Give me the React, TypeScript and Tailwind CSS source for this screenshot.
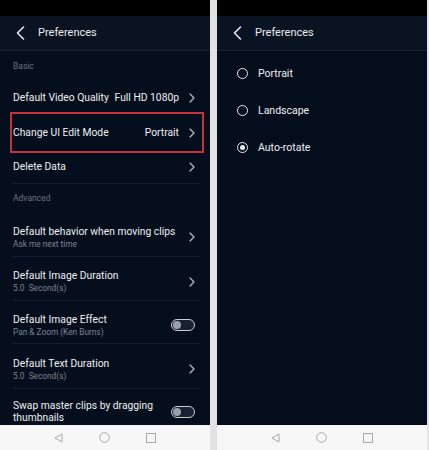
// Two phone screenshots side by side: preferences list and UI edit mode picker.
import type { ReactNode } from 'react';

const font = { fontFamily: 'Roboto, "Noto Sans", Arial, sans-serif' };

function Chevron() {
  return (
    <svg width="6" height="10" viewBox="0 0 6 10">
      <path d="M1 1l4 4-4 4" fill="none" stroke="#b8bec8" strokeWidth="1.2" strokeLinecap="round" strokeLinejoin="round" />
    </svg>
  );
}

function Back() {
  return (
    <svg width="9" height="14" viewBox="0 0 9 14">
      <path d="M7.5 1L1.5 7l6 6" fill="none" stroke="#e6e9ee" strokeWidth="1.6" strokeLinecap="round" strokeLinejoin="round" />
    </svg>
  );
}

function Toggle() {
  return (
    <div className="flex h-[12px] w-[24px] shrink-0 items-center rounded-full border border-[#c9ccd2] bg-[#1a2231] px-[1px]">
      <div className="h-[8px] w-[8px] rounded-full bg-[#9aa0a8]" />
    </div>
  );
}

function StatusBar() {
  return <div className="h-[16px] shrink-0 bg-black" />;
}

function Header() {
  return (
    <div className="flex h-[35px] shrink-0 items-center border-b border-[#1a2333] bg-[#0a1322]">
      <div className="flex w-[38px] justify-center pl-[3px]">
        <Back />
      </div>
      <span className="text-[11px] text-[#e8ebef]">Preferences</span>
    </div>
  );
}

function NavBar() {
  return (
    <div className="flex h-[25px] shrink-0 items-center justify-center gap-[36px] bg-[#f7f7f7]">
      <svg width="9" height="10" viewBox="0 0 9 10">
        <path d="M8 1L1 5l7 4z" fill="none" stroke="#a8a8a8" strokeWidth="1" strokeLinejoin="round" />
      </svg>
      <svg width="11" height="11" viewBox="0 0 11 11">
        <circle cx="5.5" cy="5.5" r="4.8" fill="none" stroke="#a8a8a8" strokeWidth="1" />
      </svg>
      <svg width="10" height="10" viewBox="0 0 10 10">
        <rect x="0.5" y="0.5" width="9" height="9" fill="none" stroke="#a8a8a8" strokeWidth="1" />
      </svg>
    </div>
  );
}

function Section({ label, h }: { label: string; h: string }) {
  return (
    <div className={`flex shrink-0 items-center px-[13px] text-[8.5px] text-[#6c7482] ${h}`}>{label}</div>
  );
}

function Row({
  title,
  sub,
  value,
  right,
  h,
  line = false,
  highlight = false,
}: {
  title: string;
  sub?: string;
  value?: string;
  right?: ReactNode;
  h: string;
  line?: boolean;
  highlight?: boolean;
}) {
  return (
    <div className={`relative flex shrink-0 items-center pl-[13px] pr-[15px] ${h} ${line ? 'after:absolute after:bottom-0 after:left-[13px] after:right-[10px] after:h-px after:bg-[#151e2c]' : ''}`}>
      {highlight && (
        <div className="absolute inset-y-[-3px] left-[10px] right-[6px] border-2 border-[#c8323c]" />
      )}
      <div className="flex min-w-0 flex-1 flex-col">
        <span className="text-[10.3px] leading-[12px] text-[#eef0f3]">{title}</span>
        {sub && (
          <span className="mt-[1px] whitespace-pre text-[8.3px] leading-[10px] text-[#7d8592]">{sub}</span>
        )}
      </div>
      {value && <span className="mr-[10px] whitespace-nowrap text-[10.3px] text-[#eef0f3]">{value}</span>}
      <div className="flex shrink-0 justify-end">{right ?? <Chevron />}</div>
    </div>
  );
}

function Radio({ label, checked = false }: { label: string; checked?: boolean }) {
  return (
    <div className="flex h-[37px] items-center pl-[20px]">
      <div className="flex h-[11px] w-[11px] items-center justify-center rounded-full border-[1.5px] border-[#e8ebef]">
        {checked && <div className="h-[5px] w-[5px] rounded-full bg-[#e8ebef]" />}
      </div>
      <span className="ml-[10px] text-[10.5px] text-[#eef0f3]">{label}</span>
    </div>
  );
}

export default function App() {
  return (
    <div style={font} className="flex h-[450px] w-[429px] bg-[#e6e6e6]">
      {/* Pantalla izquierda: lista de preferencias */}
      <div className="flex w-[210px] flex-col">
        <StatusBar />
        <Header />
        <div className="flex flex-1 flex-col overflow-hidden bg-[#050e1c]">
          <Section label="Basic" h="h-[30px]" />
          <Row title="Default Video Quality" value="Full HD 1080p" h="h-[34px]" />
          <Row title="Change UI Edit Mode" value="Portrait" h="h-[35px]" highlight />
          <Row title="Delete Data" h="h-[34px]" line />
          <Section label="Advanced" h="h-[28px]" />
          <Row title="Default behavior when moving clips" sub="Ask me next time" h="h-[45px] pt-[5px]" line />
          <Row title="Default Image Duration" sub="5.0  Second(s)" h="h-[44px] pt-[5px]" line />
          <Row title="Default Image Effect" sub="Pan & Zoom (Ken Burns)" h="h-[43px] pt-[5px]" line right={<Toggle />} />
          <Row title="Default Text Duration" sub="5.0  Second(s)" h="h-[45px] pt-[5px]" line />
          <Row title="Swap master clips by dragging thumbnails" h="h-[36px] pt-[10px]" right={<Toggle />} />
        </div>
        <NavBar />
      </div>

      <div className="w-[7px] bg-[#e2e2e2]" />

      {/* Pantalla derecha: selector de modo */}
      <div className="flex w-[210px] flex-col">
        <StatusBar />
        <Header />
        <div className="flex flex-1 flex-col bg-[#030d1c] pt-[4px]">
          <Radio label="Portrait" />
          <Radio label="Landscape" />
          <Radio label="Auto-rotate" checked />
        </div>
        <NavBar />
      </div>
    </div>
  );
}
